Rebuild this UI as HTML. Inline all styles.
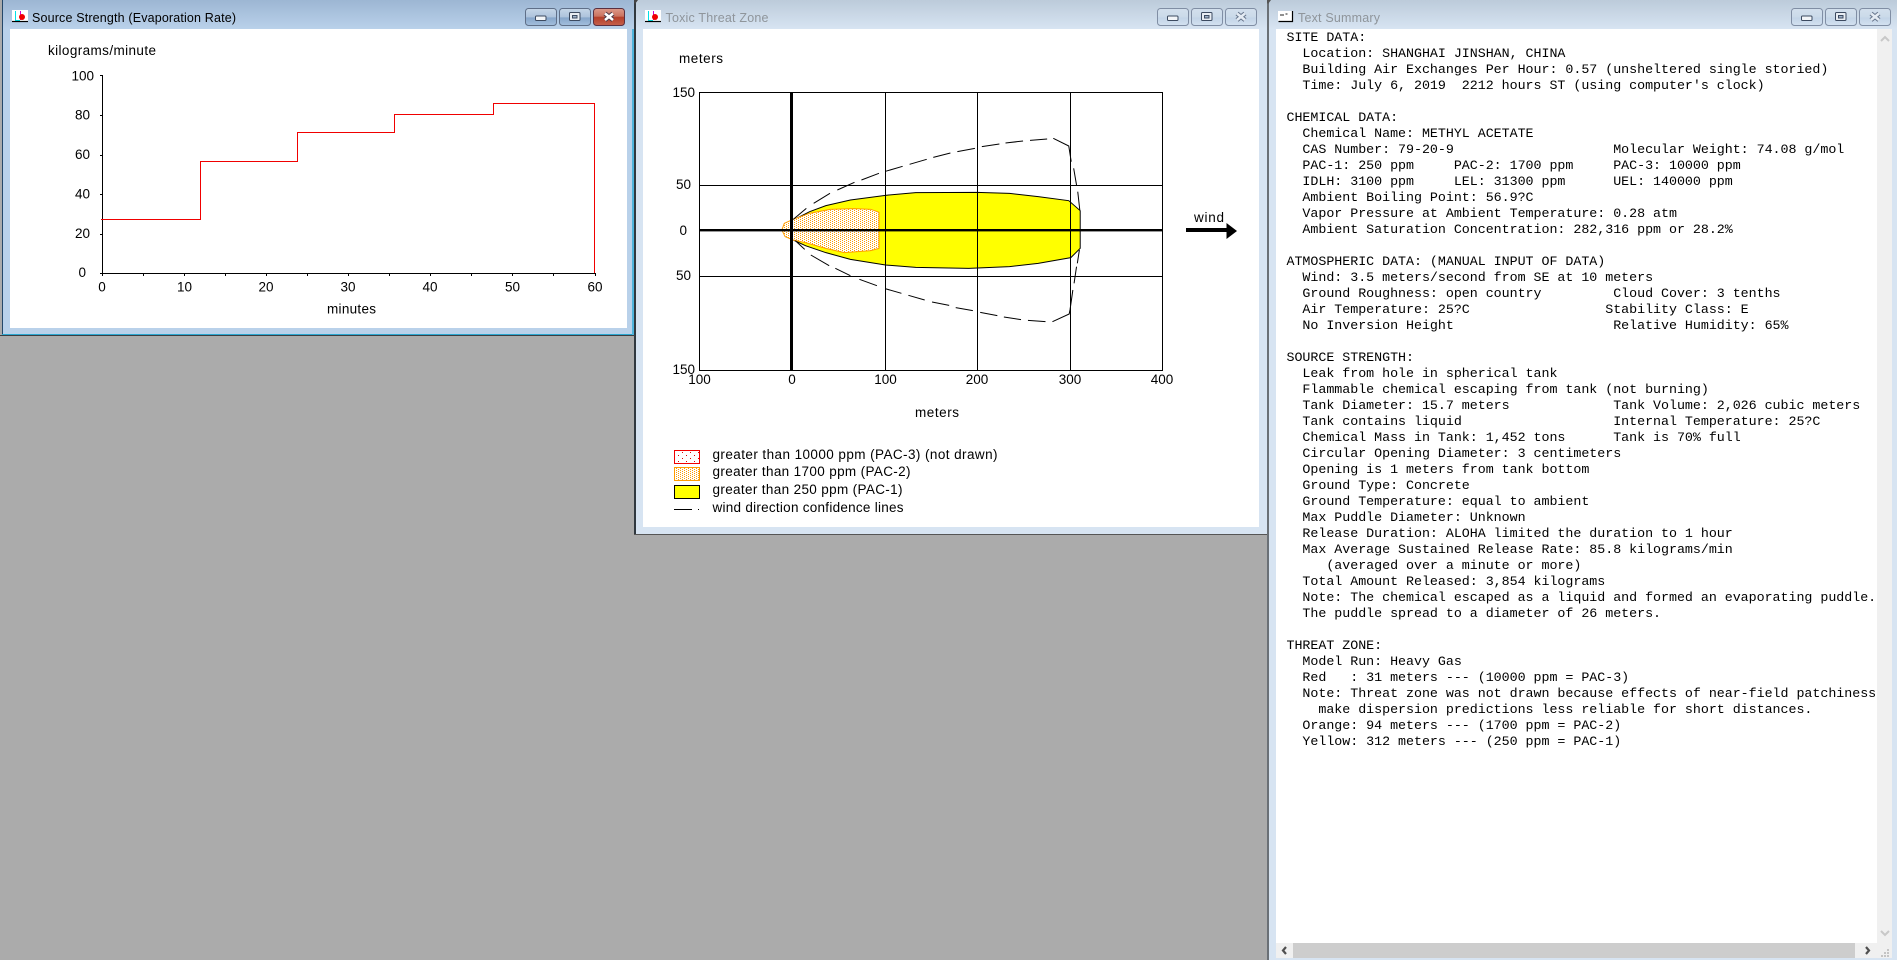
<!DOCTYPE html>
<html>
<head>
<meta charset="utf-8">
<title>ALOHA</title>
<style>
html,body{margin:0;padding:0;background:#ababab;}
#root{position:relative;width:1897px;height:960px;overflow:hidden;background:#ababab;}
svg#s{position:absolute;left:0;top:0;}
svg text{font-family:"Liberation Sans",sans-serif;font-size:13.5px;fill:#000;}
svg text.t{font-size:12.5px;}
svg text.m{text-anchor:middle;}
svg text.e{text-anchor:end;}
g.z *{vector-effect:non-scaling-stroke;}
#clip{position:absolute;left:1276px;top:29px;width:601px;height:914px;overflow:hidden;}
pre{margin:0;padding:2px 0 0 10.5px;font-family:"Liberation Mono",monospace;font-size:13.33px;letter-spacing:-0.03px;line-height:16px;color:#000;white-space:pre;}
</style>
</head>
<body>
<div id="root">
<svg id="s" width="1897" height="960" viewBox="0 0 1897 960" xmlns="http://www.w3.org/2000/svg">
<defs>
<linearGradient id="ta" x1="0" y1="0" x2="0" y2="1"><stop offset="0" stop-color="#9cb6d3"/><stop offset="1" stop-color="#b9d1ea"/></linearGradient>
<linearGradient id="ti" x1="0" y1="0" x2="0" y2="1"><stop offset="0" stop-color="#bccbda"/><stop offset="1" stop-color="#d7e4f2"/></linearGradient>
<linearGradient id="ba" x1="0" y1="0" x2="0" y2="1"><stop offset="0" stop-color="#c6d6e8"/><stop offset=".5" stop-color="#adc3dc"/><stop offset=".55" stop-color="#87a6ca"/><stop offset="1" stop-color="#a3bfdd"/></linearGradient>
<linearGradient id="bi" x1="0" y1="0" x2="0" y2="1"><stop offset="0" stop-color="#d3e0ed"/><stop offset=".5" stop-color="#cbdae9"/><stop offset=".55" stop-color="#c3d4e7"/><stop offset="1" stop-color="#d3e1f0"/></linearGradient>
<linearGradient id="bc" x1="0" y1="0" x2="0" y2="1"><stop offset="0" stop-color="#dc9a8a"/><stop offset=".45" stop-color="#cb7460"/><stop offset=".52" stop-color="#b53f29"/><stop offset="1" stop-color="#c5614c"/></linearGradient>
<pattern id="po" width="4" height="2" patternUnits="userSpaceOnUse" patternTransform="scale(2.45,3)">
<rect width="4" height="2" fill="#fff"/><rect x="0" y="0" width="1" height="1" fill="#ff9c00"/><rect x="2" y="1" width="1" height="1" fill="#ff9c00"/>
</pattern>
<pattern id="po2" width="4" height="2" patternUnits="userSpaceOnUse">
<rect width="4" height="2" fill="#fff"/><rect x="0" y="0" width="1" height="1" fill="#ff9c00"/><rect x="2" y="1" width="1" height="1" fill="#ff9c00"/>
</pattern>
<pattern id="pr" width="8" height="6" patternUnits="userSpaceOnUse">
<rect width="8" height="6" fill="#fff"/><rect x="2" y="2" width="1" height="1" fill="#e00000"/><rect x="6" y="5" width="1" height="1" fill="#e00000"/>
</pattern>
<g id="mn"><rect x="10.5" y="8" width="10.5" height="4.5" rx="1" fill="#f2f5f8" stroke="#3c4a60"/></g>
<g id="mx"><rect x="10.5" y="4.5" width="10.5" height="8" rx="1" fill="#e8edf3" stroke="#3c4a60"/><rect x="13.5" y="7.5" width="4.5" height="2.5" fill="#9fb3ca" stroke="#3c4a60"/></g>
<g id="xx"><path d="M12 5.5L20 12M20 5.5L12 12" stroke="#4a3a48" stroke-width="4.6" fill="none"/><path d="M12 5.5L20 12M20 5.5L12 12" stroke="#fff" stroke-width="2.6" fill="none"/></g>
<g id="xi"><path d="M12 5.5L20 12M20 5.5L12 12" stroke="#66758c" stroke-width="4.6" fill="none"/><path d="M12 5.5L20 12M20 5.5L12 12" stroke="#e4ebf3" stroke-width="2.6" fill="none"/></g>
<g id="ic">
<rect x="0" y="0" width="16" height="12" fill="#fff"/>
<path d="M3.5 1V10.5H8" stroke="#00e0e8" stroke-width="1" fill="none"/>
<path d="M8.5 1V10" stroke="#d000d0" stroke-width="1"/>
<circle cx="10" cy="7" r="3" fill="#f00000"/>
<path d="M0 11.5H16" stroke="#000" stroke-width="1.2"/>
</g>
</defs>

<!-- Window 3: Text Summary -->
<rect x="1267" y="0" width="630" height="960" fill="#d7e4f2"/>
<rect x="1267" y="0" width="630" height="29" fill="url(#ti)"/>
<rect x="1267" y="0" width="2" height="960" fill="#6a7076"/>
<path d="M1265 0L1268 4L1271 0Z" fill="#555"/>
<rect x="1276" y="29" width="601" height="914" fill="#fff"/>
<rect x="1877" y="29" width="15" height="929" fill="#f0f0f0"/>
<rect x="1276" y="943" width="616" height="15" fill="#f0f0f0"/>
<rect x="1293" y="943" width="562" height="15" fill="#cdcdcd"/>
<path d="M1881 41L1885 37L1889 41" stroke="#c8c8c8" stroke-width="2" fill="none"/>
<path d="M1881 931L1885 935L1889 931" stroke="#c8c8c8" stroke-width="2" fill="none"/>
<path d="M1286 947L1283 950.5L1286 954" stroke="#505050" stroke-width="2.2" fill="none"/>
<path d="M1866 947L1869 950.5L1866 954" stroke="#505050" stroke-width="2.2" fill="none"/>
<g fill="#c4c4c4"><rect x="1887" y="949" width="2" height="2"/><rect x="1884" y="952" width="2" height="2"/><rect x="1887" y="952" width="2" height="2"/><rect x="1881" y="955" width="2" height="2"/><rect x="1884" y="955" width="2" height="2"/><rect x="1887" y="955" width="2" height="2"/></g>
<g transform="translate(1278,11)">
<rect x="0" y="0" width="14" height="10" fill="#fff"/>
<path d="M0.5 10.5H14.5V0" stroke="#000" stroke-width="1.2" fill="none"/>
<path d="M3 3V5M5 3V5M7.5 3H9.5" stroke="#222" stroke-width="1"/>
</g>
<text class="t" x="1298" y="22" textLength="82" style="fill:#8f959b">Text Summary</text>

<!-- Window 2: Toxic Threat Zone -->
<rect x="634" y="0" width="633" height="535" fill="#d7e4f2"/>
<rect x="634" y="0" width="633" height="29" fill="url(#ti)"/>
<rect x="634" y="0" width="2" height="535" fill="#30383f"/>
<path d="M632 0L635 4L638 0Z" fill="#444"/>
<rect x="634" y="534" width="633" height="1" fill="#555"/>
<rect x="643" y="29" width="616" height="498" fill="#fff"/>
<use href="#ic" x="645" y="10"/>
<text class="t" x="665.5" y="22" textLength="103" style="fill:#8f959b">Toxic Threat Zone</text>

<text x="679" y="63" textLength="44">meters</text>

<g class="z" transform="translate(630,0) scale(.40816,.33333)">
<path d="M400 660L440 635L480 617L540 600L626 586L700 578L850 577L930 580L1000 590L1075 602L1103 632L1103 745L1080 773L1000 790L930 800L830 805L700 802L626 795L540 778L480 758L430 737L400 720Z" fill="#ffff00" stroke="#000" stroke-width="1"/>
<path d="M372 690L378 670L400 658L440 640L490 628L550 626L590 628L610 637L610 745L590 752L525 758L480 745L430 728L400 720L380 710Z" fill="url(#po)" stroke="#ff9c00" stroke-width="1"/>
</g>

<g stroke="#000" stroke-width="1" fill="none" shape-rendering="crispEdges">
<rect x="699.5" y="92.5" width="463" height="278"/>
<path d="M885.5 92V370M977.5 92V370M1070.5 92V370M699 185.5H1162M699 276.5H1162"/>
</g>
<rect x="790" y="92" width="3" height="278" fill="#000"/>
<rect x="699" y="229" width="463" height="2.4" fill="#000"/>

<g class="z" transform="translate(630,0) scale(.40816,.33333)" fill="none" stroke="#000" stroke-width="1">
<path d="M400 658L432 625M450 610L490 580M508 570L550 547M567 540L610 520M626 514L668 499M685 493L727 478M743 472L785 459M802 455L845 445M862 440L905 432M920 429L963 423M980 421L1022 417M1037 415L1075 438L1081 485M1087 505L1094 555M1097 575L1102 630"/>
<path d="M1101 750L1096 790M1094 800L1088 850M1085 870L1078 930L1076 942L1035 965M1018 965L975 961M958 959L916 951M900 947L858 937M840 932L798 923M782 916L740 906M722 900L682 886M665 880L625 866M605 857L562 838M540 827L503 805M488 797L443 765M428 748L405 722"/>
</g>

<rect x="1186" y="228" width="41" height="4" fill="#000"/>
<path d="M1226.5 223V239L1237 231Z" fill="#000"/>
<text x="1194" y="222" textLength="30">wind</text>

<text class="e" x="695" y="97">150</text>
<text class="e" x="691" y="189">50</text>
<text class="e" x="687" y="235">0</text>
<text class="e" x="691" y="280">50</text>
<text class="e" x="695" y="374">150</text>
<text class="m" x="699.5" y="384">100</text>
<text class="m" x="792" y="384">0</text>
<text class="m" x="885.5" y="384">100</text>
<text class="m" x="977" y="384">200</text>
<text class="m" x="1070" y="384">300</text>
<text class="m" x="1162" y="384">400</text>
<text x="915" y="417" textLength="44">meters</text>

<rect x="674.5" y="450.5" width="25" height="13" fill="url(#pr)" stroke="#f00000"/>
<rect x="674.5" y="467.5" width="25" height="13" fill="url(#po2)" stroke="#ff9c00"/>
<rect x="674.5" y="485.5" width="25" height="13" fill="#ffff00" stroke="#000"/>
<path d="M674 509.5H692M698 509.5H699" stroke="#000" shape-rendering="crispEdges"/>
<text x="712.5" y="459" textLength="285">greater than 10000 ppm (PAC-3) (not drawn)</text>
<text x="712.5" y="476" textLength="198">greater than 1700 ppm (PAC-2)</text>
<text x="712.5" y="494" textLength="190">greater than 250 ppm (PAC-1)</text>
<text x="712.5" y="512" textLength="191">wind direction confidence lines</text>

<!-- Window 1: Source Strength -->
<rect x="2" y="0" width="632" height="335" fill="#b9d1ea"/>
<rect x="2" y="0" width="632" height="29" fill="url(#ta)"/>
<rect x="2" y="0" width="1" height="335" fill="#24486a"/>
<rect x="2" y="334" width="632" height="1" fill="#2aa6cf"/>
<rect x="0" y="335" width="635" height="1" fill="#3a3f44"/>
<rect x="632" y="29" width="2" height="306" fill="#4fb4dc"/>
<rect x="10" y="29" width="617" height="299" fill="#fff"/>
<use href="#ic" x="12" y="10"/>
<text class="t" x="32" y="22" textLength="204">Source Strength (Evaporation Rate)</text>

<text x="48" y="55" textLength="108">kilograms/minute</text>
<g stroke="#000" fill="none" shape-rendering="crispEdges">
<path d="M102.5 75V274M100 75.5H102M100 115.5H102M100 155.5H102M100 194.5H102M100 234.5H102M100 273.5H102"/>
<path d="M101 273.5H596M102.500 273V276M143.500 273V276M184.500 273V276M225.500 273V276M266.500 273V276M307.500 273V276M348.500 273V276M389.500 273V276M430.500 273V276M471.500 273V276M512.500 273V276M553.500 273V276M595.500 273V276"/>
</g>
<path d="M101 219.500H200.500V161.500H297.500V132.500H394.500V114.500H493.500V103.500H594.500V273" fill="none" stroke="#f00000" stroke-width="1" shape-rendering="crispEdges"/>
<text class="e" x="94" y="80.500">100</text>
<text class="e" x="90" y="119.500">80</text>
<text class="e" x="90" y="159">60</text>
<text class="e" x="90" y="198.500">40</text>
<text class="e" x="90" y="238">20</text>
<text class="e" x="86" y="277">0</text>
<text class="m" x="102" y="291.500">0</text>
<text class="m" x="184.500" y="291.500">10</text>
<text class="m" x="266" y="291.500">20</text>
<text class="m" x="348" y="291.500">30</text>
<text class="m" x="430" y="291.500">40</text>
<text class="m" x="512.500" y="291.500">50</text>
<text class="m" x="595" y="291.500">60</text>
<text x="327" y="313.500" textLength="49">minutes</text>

<!-- Buttons -->
<g stroke-width="1">
<rect x="525.500" y="8.500" width="31" height="17" rx="3" fill="url(#ba)" stroke="#5f6f88"/>
<rect x="559.500" y="8.500" width="31" height="17" rx="3" fill="url(#ba)" stroke="#5f6f88"/>
<rect x="593.500" y="8.500" width="31" height="17" rx="3" fill="url(#bc)" stroke="#5b3040"/>
<rect x="1157.500" y="8.500" width="31" height="17" rx="3" fill="url(#bi)" stroke="#808ea4"/>
<rect x="1191.500" y="8.500" width="31" height="17" rx="3" fill="url(#bi)" stroke="#808ea4"/>
<rect x="1225.500" y="8.500" width="31" height="17" rx="3" fill="url(#bi)" stroke="#808ea4"/>
<rect x="1791.500" y="8.500" width="31" height="17" rx="3" fill="url(#bi)" stroke="#808ea4"/>
<rect x="1825.500" y="8.500" width="31" height="17" rx="3" fill="url(#bi)" stroke="#808ea4"/>
<rect x="1859.500" y="8.500" width="31" height="17" rx="3" fill="url(#bi)" stroke="#808ea4"/>
</g>
<use href="#mn" x="525" y="8"/><use href="#mx" x="559" y="8"/><use href="#xx" x="593" y="8"/>
<use href="#mn" x="1157" y="8"/><use href="#mx" x="1191" y="8"/><use href="#xi" x="1225" y="8"/>
<use href="#mn" x="1791" y="8"/><use href="#mx" x="1825" y="8"/><use href="#xi" x="1859" y="8"/>
</svg>

<div id="clip"><pre>SITE DATA:
  Location: SHANGHAI JINSHAN, CHINA
  Building Air Exchanges Per Hour: 0.57 (unsheltered single storied)
  Time: July 6, 2019  2212 hours ST (using computer's clock)

CHEMICAL DATA:
  Chemical Name: METHYL ACETATE
  CAS Number: 79-20-9                    Molecular Weight: 74.08 g/mol
  PAC-1: 250 ppm     PAC-2: 1700 ppm     PAC-3: 10000 ppm
  IDLH: 3100 ppm     LEL: 31300 ppm      UEL: 140000 ppm
  Ambient Boiling Point: 56.9?C
  Vapor Pressure at Ambient Temperature: 0.28 atm
  Ambient Saturation Concentration: 282,316 ppm or 28.2%

ATMOSPHERIC DATA: (MANUAL INPUT OF DATA)
  Wind: 3.5 meters/second from SE at 10 meters
  Ground Roughness: open country         Cloud Cover: 3 tenths
  Air Temperature: 25?C                 Stability Class: E
  No Inversion Height                    Relative Humidity: 65%

SOURCE STRENGTH:
  Leak from hole in spherical tank
  Flammable chemical escaping from tank (not burning)
  Tank Diameter: 15.7 meters             Tank Volume: 2,026 cubic meters
  Tank contains liquid                   Internal Temperature: 25?C
  Chemical Mass in Tank: 1,452 tons      Tank is 70% full
  Circular Opening Diameter: 3 centimeters
  Opening is 1 meters from tank bottom
  Ground Type: Concrete
  Ground Temperature: equal to ambient
  Max Puddle Diameter: Unknown
  Release Duration: ALOHA limited the duration to 1 hour
  Max Average Sustained Release Rate: 85.8 kilograms/min
     (averaged over a minute or more)
  Total Amount Released: 3,854 kilograms
  Note: The chemical escaped as a liquid and formed an evaporating puddle.
  The puddle spread to a diameter of 26 meters.

THREAT ZONE:
  Model Run: Heavy Gas
  Red   : 31 meters --- (10000 ppm = PAC-3)
  Note: Threat zone was not drawn because effects of near-field patchiness
    make dispersion predictions less reliable for short distances.
  Orange: 94 meters --- (1700 ppm = PAC-2)
  Yellow: 312 meters --- (250 ppm = PAC-1)</pre></div>
</div>
</body>
</html>
